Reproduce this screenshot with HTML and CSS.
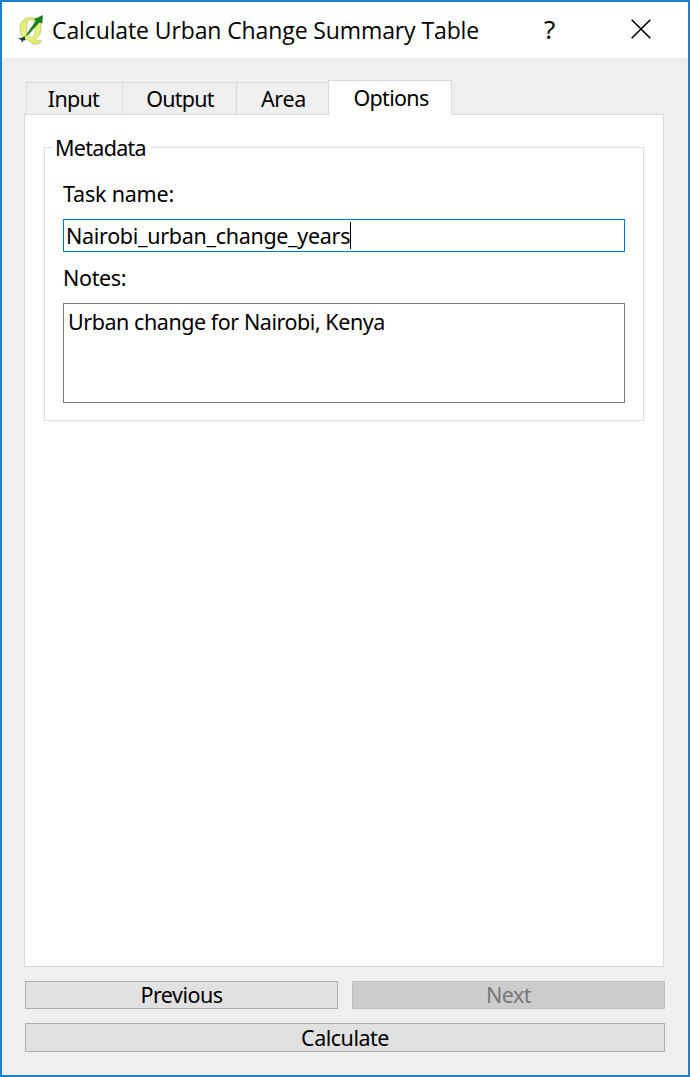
FILE: index.html
```html
<!DOCTYPE html>
<html lang="en">
<head>
<meta charset="utf-8">
<title>Calculate Urban Change Summary Table</title>
<link rel="stylesheet" href="styles.css">
</head>
<body>
<main class="window">
  <header class="titlebar">
    <svg class="logo" viewBox="0 0 28 34" width="28" height="34" aria-hidden="true">
      <defs>
        <linearGradient id="leaf" x1="0" y1="0" x2="1" y2="1">
          <stop offset="0" stop-color="#dbe75c"/>
          <stop offset="0.5" stop-color="#edf486"/>
          <stop offset="1" stop-color="#d8e858"/>
        </linearGradient>
      </defs>
      <path d="M13.500 4.500C6.500 4.500 3 9.500 3 15.500C3 21.500 6 26.200 11.500 27C14 30.800 18 32.300 22 30.500C23.800 29.600 24.800 28.300 24.100 27.300C22.800 28 20.300 28.300 18.600 25.700C22.400 23.700 24 19.500 24 14.800C24 8.500 20.500 4.500 13.500 4.500ZM13.200 6.800C16.800 6.500 18.200 10 18.200 15C18.200 20.500 17 24 14.500 24.300C11 24.600 9.700 20.500 9.700 15.500C9.700 10.500 10.500 7 13.200 6.800Z" fill="url(#leaf)" fill-rule="evenodd" stroke="#a9b77a" stroke-width=".6"/>
      <path d="M9 22.500L19.300 7.500L17 6.400L25.500 2.500L25 10.300L22.600 8.900L11.500 21.300Z" fill="#15851b" stroke="#086010" stroke-width=".5"/>
      <path d="M1 25.300L5.200 24.800L8 22.800L7.700 25.300L9 27.200L6.500 27.200L4.900 29.800L4.200 27Z" fill="#143c20"/>
    </svg>
    <h1 class="title">Calculate Urban Change Summary Table</h1>
    <span class="help">?</span>
    <svg class="close" viewBox="0 0 20 20" width="20" height="20" aria-label="Close"><path d="M.7.700L19.300 19.300M19.300.700L.7 19.300" stroke="#000" stroke-width="1.600"/></svg>
  </header>
  <nav class="tabs">
    <div class="tab tab-input"><span>Input</span></div>
    <div class="tab tab-output"><span>Output</span></div>
    <div class="tab tab-area"><span>Area</span></div>
    <div class="tab tab-active"><span>Options</span></div>
  </nav>
  <section class="panel">
    <div class="group">
      <div class="legend"><span class="metadata">Metadata</span></div>
      <div class="label task-label"><span>Task name:</span></div>
      <div class="line-edit"><span class="task-value">Nairobi_urban_change_years</span><i class="caret"></i></div>
      <div class="label notes-label"><span>Notes:</span></div>
      <div class="text-edit"><span class="notes-value">Urban change for Nairobi, Kenya</span></div>
    </div>
  </section>
  <footer class="actions">
    <div class="button previous"><span>Previous</span></div>
    <div class="button next"><span>Next</span></div>
    <div class="button calculate"><span>Calculate</span></div>
  </footer>
</main>
</body>
</html>
```
FILE: styles.css
```css
* { box-sizing: border-box; }
body { margin: 0; }
.window {
  width: 690px; height: 1077px;
  border: 2px solid #1a81d7;
  background: #efefef;
  display: flex; flex-direction: column;
  font: 21.5px/28px "Noto Sans", sans-serif;
  color: #000;
  white-space: nowrap;
}
.titlebar {
  height: 56px; background: #fff;
  display: flex; align-items: flex-start;
  padding-left: 15px;
}
.logo { margin-top: 11px; }
.title {
  margin: 12px 0 0 7px; width: 492px;
  font: 400 23px/32px "Open Sans", sans-serif;
  letter-spacing: -.11px;
}
.help { width: 20px; margin-top: 11px; font: 400 26px/32px "Noto Sans", sans-serif; }
.close { margin: 17px 0 0 67px; }
.tabs {
  height: 35px; margin: 22px 0 -1px 24px;
  display: flex; align-items: flex-end;
  position: relative; z-index: 1;
}
.tab {
  height: 33px; border: 1px solid #d9d9d9; border-right: 0;
  display: flex; justify-content: center; line-height: 31px;
}
.tab-input { width: 96px; letter-spacing: -.7px; padding-right: 2px; }
.tab-output { width: 114px; letter-spacing: -.8px; padding-left: 1px; }
.tab-area { width: 92px; letter-spacing: -.3px; padding-left: 2px; }
.tab-active {
  width: 124px; height: 35px; background: #fff;
  border-right: 1px solid #d9d9d9; border-bottom: 0; line-height: 33px;
  letter-spacing: -.7px; padding-left: 2px;
}
.panel {
  width: 640px; height: 853px; margin-left: 22px;
  border: 1px solid #d9d9d9; background: #fff;
  padding: 32px 19px 0;
}
.group {
  height: 274px; border: 1px solid #dcdcdc;
  padding: 0 18px;
  display: flex; flex-direction: column;
}
.legend { height: 28px; margin: -14px 0 0 -11px; }
.metadata { display: inline-block; width: 98px; padding-left: 3px; background: #fff; letter-spacing: -.7px; }
.label { height: 28px; }
.task-label { margin-top: 18px; letter-spacing: -.2px; }
.line-edit {
  height: 33px; margin-top: 11px;
  border: 1px solid #0078d7; padding: 2px 2px;
  display: flex; letter-spacing: -.31px;
}
.caret { width: 1px; height: 27px; background: #000; }
.notes-label { margin-top: 12px; letter-spacing: -.35px; }
.text-edit {
  height: 100px; margin-top: 11px;
  border: 1px solid #7a7a7a; padding: 4px 4px;
  letter-spacing: -.45px;
}
.actions {
  display: grid; grid-template-columns: 313px 313px;
  grid-template-rows: 28px 29px; gap: 14px;
  margin: 14px 0 0 23px;
}
.button {
  border: 1px solid #adadad; background: #e1e1e1;
  display: flex; justify-content: center; line-height: 25px;
  letter-spacing: -.5px;
}
.next { background: #ccc; border-color: #bfbfbf; color: #787878; }
.calculate { grid-column: 1 / 3; line-height: 28px; }
```
